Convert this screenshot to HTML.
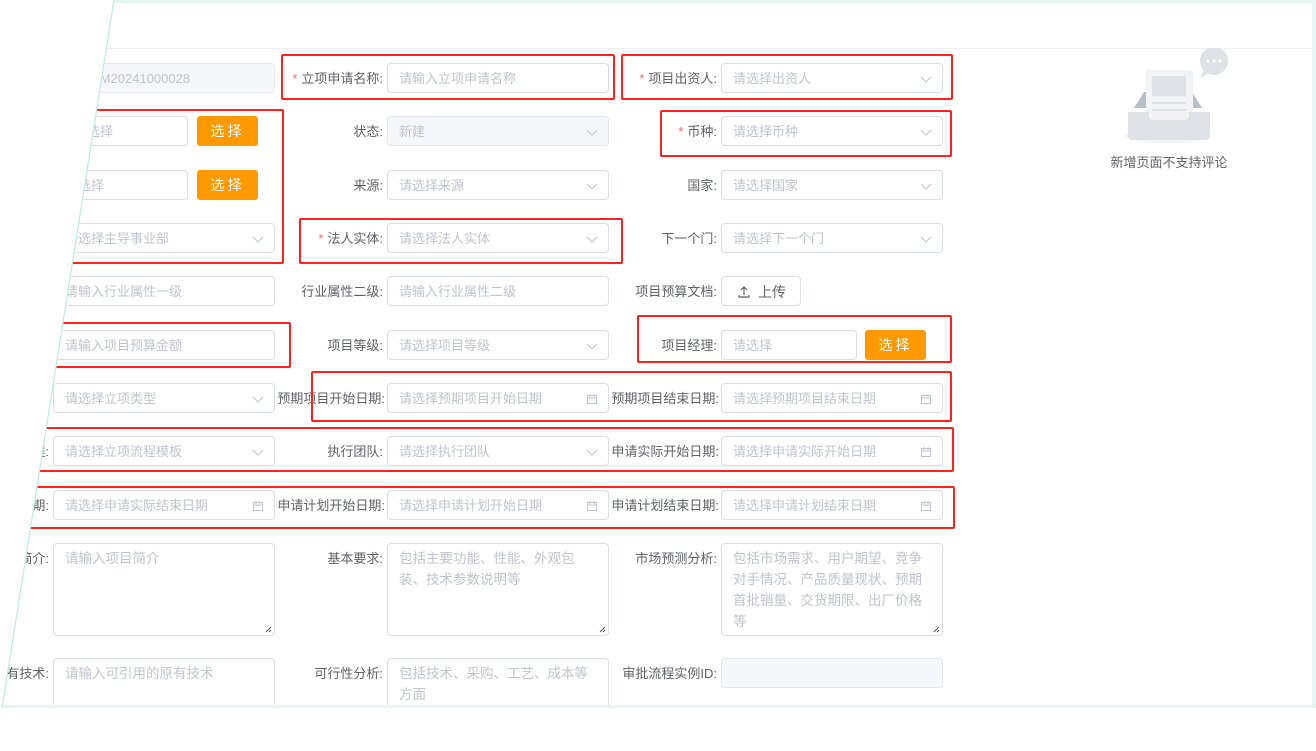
<!DOCTYPE html>
<html><head><meta charset="utf-8"><style>
*{margin:0;padding:0;box-sizing:border-box}
body{width:1316px;height:708px;background:#fff;overflow:hidden;position:relative;font-family:"Liberation Sans","Noto Sans CJK SC",sans-serif}
#panel{position:absolute;left:0;top:0;width:1316px;height:708px;clip-path:polygon(114px 0,1316px 0,1316px 708px,2px 708px);background:#fff}
.in{position:absolute;height:30px;border:1px solid #dcdfe6;border-radius:4px;font-size:13px;color:#c0c4cc;padding-left:11px;line-height:30px;white-space:nowrap;overflow:hidden;background:#fff}
.dis{background:#f5f7fa;border-color:#e4e7ed}
.ta{height:93px;line-height:21px;padding-top:4px;white-space:normal;padding-right:10px;font-size:13.5px}
.lb{position:absolute;height:30px;line-height:31px;font-size:13px;color:#606266;text-align:right;white-space:nowrap;padding-right:4px}
.lb b{color:#f56c6c;font-weight:normal;margin-right:4px}
.btn{position:absolute;height:30px;width:61px;background:#ff9900;color:#fff;border-radius:3px;font-size:14px;line-height:30px;text-align:center;letter-spacing:3px}
.red{position:absolute;border:2px solid #ff2020;border-radius:2px}
.ic{position:absolute;right:10px;top:9px}
.rz{position:absolute;right:2px;bottom:2px}
</style></head><body>
<div id="panel">
<div style="position:absolute;left:0;top:0;width:1316px;height:3px;background:#e6f5f2"></div>
<div style="position:absolute;left:0;top:48px;width:1316px;height:1px;background:#eef0f3"></div>

<!-- row1 -->
<div class="lb" style="left:-100px;width:153px;top:63px">立项编号:</div>
<div class="in dis" style="left:53px;top:63px;width:222px;padding-left:37px">XM20241000028</div>
<div class="lb" style="left:233px;width:154px;top:63px"><b>*</b>立项申请名称:</div>
<div class="in" style="left:387px;top:63px;width:222px">请输入立项申请名称</div>
<div class="lb" style="left:567px;width:154px;top:63px"><b>*</b>项目出资人:</div>
<div class="in" style="left:721px;top:63px;width:222px">请选择出资人<svg class="ic" width="12" height="12"><path d="M1 4l5 5 5-5" fill="none" stroke="#c0c4cc"/></svg></div>

<!-- row2 -->
<div class="in" style="left:53px;top:116px;width:135px;padding-left:20px">请选择</div>
<div class="btn" style="left:197px;top:116px">选择</div>
<div class="lb" style="left:233px;width:154px;top:116px">状态:</div>
<div class="in dis" style="left:387px;top:116px;width:222px">新建<svg class="ic" width="12" height="12"><path d="M1 4l5 5 5-5" fill="none" stroke="#c0c4cc"/></svg></div>
<div class="lb" style="left:567px;width:154px;top:116px"><b>*</b>币种:</div>
<div class="in" style="left:721px;top:116px;width:222px">请选择币种<svg class="ic" width="12" height="12"><path d="M1 4l5 5 5-5" fill="none" stroke="#c0c4cc"/></svg></div>

<!-- row3 -->
<div class="in" style="left:53px;top:170px;width:135px;padding-left:11px">请选择</div>
<div class="btn" style="left:197px;top:170px">选择</div>
<div class="lb" style="left:233px;width:154px;top:170px">来源:</div>
<div class="in" style="left:387px;top:170px;width:222px">请选择来源<svg class="ic" width="12" height="12"><path d="M1 4l5 5 5-5" fill="none" stroke="#c0c4cc"/></svg></div>
<div class="lb" style="left:567px;width:154px;top:170px">国家:</div>
<div class="in" style="left:721px;top:170px;width:222px">请选择国家<svg class="ic" width="12" height="12"><path d="M1 4l5 5 5-5" fill="none" stroke="#c0c4cc"/></svg></div>

<!-- row4 -->
<div class="in" style="left:53px;top:223px;width:222px">请选择主导事业部<svg class="ic" width="12" height="12"><path d="M1 4l5 5 5-5" fill="none" stroke="#c0c4cc"/></svg></div>
<div class="lb" style="left:233px;width:154px;top:223px"><b>*</b>法人实体:</div>
<div class="in" style="left:387px;top:223px;width:222px">请选择法人实体<svg class="ic" width="12" height="12"><path d="M1 4l5 5 5-5" fill="none" stroke="#c0c4cc"/></svg></div>
<div class="lb" style="left:567px;width:154px;top:223px">下一个门:</div>
<div class="in" style="left:721px;top:223px;width:222px">请选择下一个门<svg class="ic" width="12" height="12"><path d="M1 4l5 5 5-5" fill="none" stroke="#c0c4cc"/></svg></div>

<!-- row5 -->
<div class="in" style="left:53px;top:276px;width:222px">请输入行业属性一级</div>
<div class="lb" style="left:233px;width:154px;top:276px">行业属性二级:</div>
<div class="in" style="left:387px;top:276px;width:222px">请输入行业属性二级</div>
<div class="lb" style="left:567px;width:154px;top:276px">项目预算文档:</div>
<div class="in" style="left:721px;top:276px;width:80px;color:#606266;padding-left:16px;font-size:14px"><svg width="12" height="12" style="vertical-align:-1px;margin-right:8px"><path d="M6 9V1M3 4l3-3 3 3M1 9v2h10V9" fill="none" stroke="#606266" stroke-width="1.2"/></svg>上传</div>

<!-- row6 -->
<div class="in" style="left:53px;top:330px;width:222px">请输入项目预算金额</div>
<div class="lb" style="left:233px;width:154px;top:330px">项目等级:</div>
<div class="in" style="left:387px;top:330px;width:222px">请选择项目等级<svg class="ic" width="12" height="12"><path d="M1 4l5 5 5-5" fill="none" stroke="#c0c4cc"/></svg></div>
<div class="lb" style="left:567px;width:154px;top:330px">项目经理:</div>
<div class="in" style="left:721px;top:330px;width:136px">请选择</div>
<div class="btn" style="left:865px;top:330px">选择</div>

<!-- row7 -->
<div class="in" style="left:53px;top:383px;width:222px">请选择立项类型<svg class="ic" width="12" height="12"><path d="M1 4l5 5 5-5" fill="none" stroke="#c0c4cc"/></svg></div>
<div class="lb" style="left:233px;width:154px;top:383px;padding-right:2px">预期项目开始日期:</div>
<div class="in" style="left:387px;top:383px;width:222px">请选择预期项目开始日期<svg class="ic" width="12" height="12"><path d="M1.5 2.5h9v8h-9zM1.5 5h9M4 1v3M8 1v3" fill="none" stroke="#c0c4cc"/></svg></div>
<div class="lb" style="left:567px;width:154px;top:383px;padding-right:2px">预期项目结束日期:</div>
<div class="in" style="left:721px;top:383px;width:222px">请选择预期项目结束日期<svg class="ic" width="12" height="12"><path d="M1.5 2.5h9v8h-9zM1.5 5h9M4 1v3M8 1v3" fill="none" stroke="#c0c4cc"/></svg></div>

<!-- row8 -->
<div class="lb" style="left:-100px;width:153px;top:436px">立项流程:</div>
<div class="in" style="left:53px;top:436px;width:222px">请选择立项流程模板<svg class="ic" width="12" height="12"><path d="M1 4l5 5 5-5" fill="none" stroke="#c0c4cc"/></svg></div>
<div class="lb" style="left:233px;width:154px;top:436px">执行团队:</div>
<div class="in" style="left:387px;top:436px;width:222px">请选择执行团队<svg class="ic" width="12" height="12"><path d="M1 4l5 5 5-5" fill="none" stroke="#c0c4cc"/></svg></div>
<div class="lb" style="left:567px;width:154px;top:436px;padding-right:2px">申请实际开始日期:</div>
<div class="in" style="left:721px;top:436px;width:222px">请选择申请实际开始日期<svg class="ic" width="12" height="12"><path d="M1.5 2.5h9v8h-9zM1.5 5h9M4 1v3M8 1v3" fill="none" stroke="#c0c4cc"/></svg></div>

<!-- row9 -->
<div class="lb" style="left:-100px;width:153px;top:490px">申请实际结束日期:</div>
<div class="in" style="left:53px;top:490px;width:222px">请选择申请实际结束日期<svg class="ic" width="12" height="12"><path d="M1.5 2.5h9v8h-9zM1.5 5h9M4 1v3M8 1v3" fill="none" stroke="#c0c4cc"/></svg></div>
<div class="lb" style="left:233px;width:154px;top:490px;padding-right:2px">申请计划开始日期:</div>
<div class="in" style="left:387px;top:490px;width:222px">请选择申请计划开始日期<svg class="ic" width="12" height="12"><path d="M1.5 2.5h9v8h-9zM1.5 5h9M4 1v3M8 1v3" fill="none" stroke="#c0c4cc"/></svg></div>
<div class="lb" style="left:567px;width:154px;top:490px;padding-right:2px">申请计划结束日期:</div>
<div class="in" style="left:721px;top:490px;width:222px">请选择申请计划结束日期<svg class="ic" width="12" height="12"><path d="M1.5 2.5h9v8h-9zM1.5 5h9M4 1v3M8 1v3" fill="none" stroke="#c0c4cc"/></svg></div>

<!-- textareas -->
<div class="lb" style="left:-100px;width:153px;top:543px">项目简介:</div>
<div class="in ta" style="left:53px;top:543px;width:222px">请输入项目简介<svg class="rz" width="7" height="7"><path d="M1 6L6 1M4 6l2-2" stroke="#555"/></svg></div>
<div class="lb" style="left:233px;width:154px;top:543px">基本要求:</div>
<div class="in ta" style="left:387px;top:543px;width:222px;padding-right:28px">包括主要功能、性能、外观包装、技术参数说明等<svg class="rz" width="7" height="7"><path d="M1 6L6 1M4 6l2-2" stroke="#555"/></svg></div>
<div class="lb" style="left:567px;width:154px;top:543px">市场预测分析:</div>
<div class="in ta" style="left:721px;top:543px;width:222px">包括市场需求、用户期望、竞争对手情况、产品质量现状、预期首批销量、交货期限、出厂价格等<svg class="rz" width="7" height="7"><path d="M1 6L6 1M4 6l2-2" stroke="#555"/></svg></div>

<div class="lb" style="left:-100px;width:153px;top:658px">可引用原有技术:</div>
<div class="in ta" style="left:53px;top:658px;width:222px">请输入可引用的原有技术</div>
<div class="lb" style="left:233px;width:154px;top:658px">可行性分析:</div>
<div class="in ta" style="left:387px;top:658px;width:222px">包括技术、采购、工艺、成本等方面</div>
<div class="lb" style="left:567px;width:154px;top:658px">审批流程实例ID:</div>
<div class="in dis" style="left:721px;top:658px;width:222px"></div>

<!-- red boxes -->
<div class="red" style="left:281px;top:54px;width:334px;height:46px"></div>
<div class="red" style="left:621px;top:54px;width:332px;height:46px"></div>
<div class="red" style="left:40px;top:109px;width:244px;height:155px"></div>
<div class="red" style="left:660px;top:110px;width:292px;height:47px"></div>
<div class="red" style="left:299px;top:218px;width:324px;height:46px"></div>
<div class="red" style="left:20px;top:322px;width:271px;height:46px"></div>
<div class="red" style="left:637px;top:315px;width:315px;height:48px"></div>
<div class="red" style="left:311px;top:371px;width:641px;height:51px"></div>
<div class="red" style="left:20px;top:427px;width:934px;height:45px"></div>
<div class="red" style="left:10px;top:486px;width:945px;height:43px"></div>

<!-- empty comment illustration -->
<svg style="position:absolute;left:1120px;top:48px" width="115" height="100" viewBox="0 0 115 100">
<ellipse cx="48" cy="88" rx="43" ry="7" fill="#f3f4f6"/>
<path d="M14 60l10-16h48l10 16z" fill="#b8bec8"/>
<rect x="26" y="22" width="47" height="62" rx="2" fill="#f2f3f5"/>
<rect x="32" y="28" width="34" height="20" fill="#dfe1e6"/>
<rect x="32" y="54" width="34" height="2" fill="#dfe1e6"/>
<rect x="32" y="61" width="34" height="2" fill="#dfe1e6"/>
<path d="M8 64h21v4a4 4 0 0 0 4 4h32a4 4 0 0 0 4-4v-4h21v24a4 4 0 0 1-4 4H12a4 4 0 0 1-4-4z" fill="#dfe2e7"/>
<circle cx="94" cy="13" r="14" fill="#dfe1e6"/>
<path d="M84 22l-4 8 9-5z" fill="#dfe1e6"/>
<circle cx="88" cy="13" r="1.5" fill="#fff"/><circle cx="94" cy="13" r="1.5" fill="#fff"/><circle cx="100" cy="13" r="1.5" fill="#fff"/>
</svg>
<div style="position:absolute;left:1098px;top:154px;width:142px;text-align:center;font-size:13px;color:#606266;line-height:18px">新增页面不支持评论</div>

<div style="position:absolute;left:1312px;top:0;width:4px;height:708px;background:#e6f5f2"></div>
<div style="position:absolute;left:0;top:705px;width:1316px;height:3px;background:#e6f5f2"></div>
</div>
<svg style="position:absolute;left:0;top:0" width="1316" height="708"><line x1="114" y1="0" x2="2" y2="708" stroke="#bfeae6" stroke-width="1.2"/></svg>
</body></html>
